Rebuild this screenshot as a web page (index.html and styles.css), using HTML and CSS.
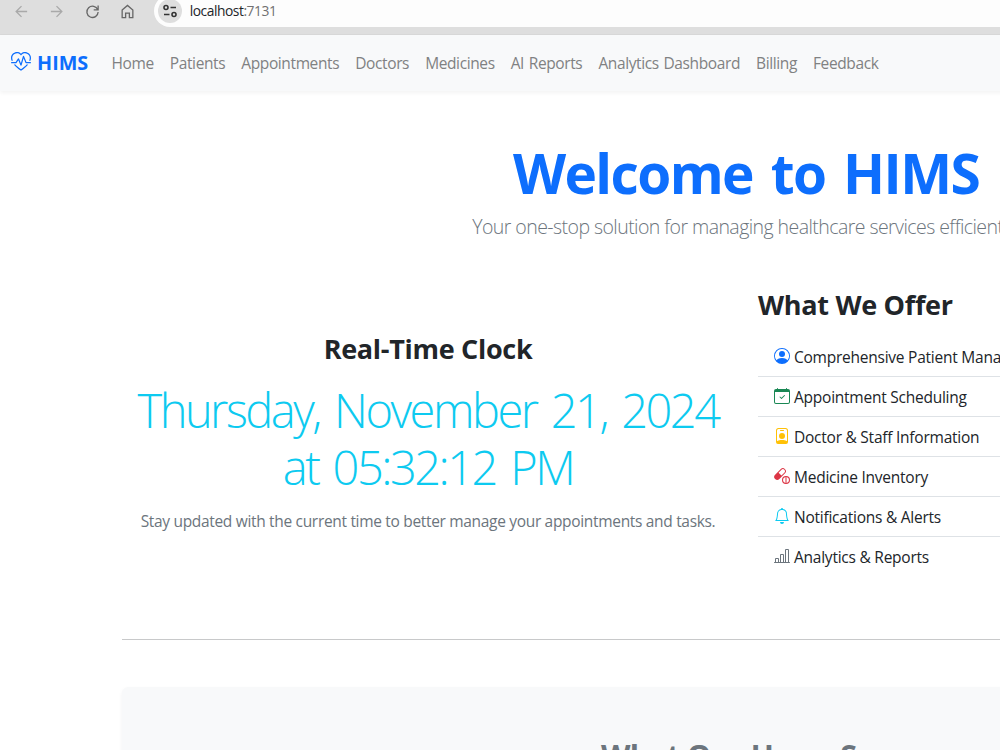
FILE: index.html
```html
<!DOCTYPE html>
<html lang="en">
<head>
    <meta charset="utf-8">
    <title>HIMS</title>
    <link rel="stylesheet" href="styles.css">
</head>
<body>
    <!-- Browser toolbar -->
    <div class="toolbar">
        <svg class="tool" viewBox="0 0 16 16"><path d="M14 8H2.5M8 2.3 2.3 8 8 13.7"/></svg>
        <svg class="tool" viewBox="0 0 16 16"><path d="M2 8h11.500M8 2.300 13.700 8 8 13.700"/></svg>
        <svg class="tool dark" viewBox="0 0 16 16"><path d="M13.600 6.200A6 6 0 1 0 14 8.500M14 1.500v4.800H9.300"/></svg>
        <svg class="tool dark" viewBox="0 0 16 16"><path d="M2.300 6.400 8 1.500l5.700 4.900v8.100H10V9.800H6v4.700H2.300z"/></svg>
        <div class="address">
            <span class="site-info">
                <svg viewBox="0 0 16 16"><circle cx="4" cy="4.500" r="2"/><path d="M8.500 4.500H14M2 11.500h5.500"/><circle cx="12" cy="11.500" r="2"/></svg>
            </span>
            <span class="url">localhost<span class="port">:7131</span></span>
        </div>
    </div>

    <div class="page">
        <nav class="navbar">
            <a class="brand">
                <svg class="brand-icon" viewBox="0 0 16 16"><path d="m8 2.748-.717-.737C5.600.281 2.514.878 1.400 3.053.918 3.995.780 5.323 1.508 7H.430c-2.128-5.697 4.165-8.830 7.394-5.857q.090.083.176.171a3 3 0 0 1 .176-.170c3.230-2.974 9.522.159 7.394 5.856h-1.078c.728-1.677.590-3.005.108-3.947C13.486.878 10.400.280 8.717 2.010zM2.212 10h1.315C4.593 11.183 6.050 12.458 8 13.795c1.949-1.337 3.407-2.612 4.473-3.795h1.315c-1.265 1.566-3.140 3.250-5.788 5-2.648-1.750-4.523-3.434-5.788-5"/><path d="M10.464 3.314a.5.5 0 0 0-.945.049L7.921 8.956 6.464 5.314a.5.5 0 0 0-.880-.091L3.732 8H.5a.5.5 0 0 0 0 1H4a.5.5 0 0 0 .416-.223l1.473-2.209 1.647 4.118a.5.5 0 0 0 .945-.049l1.598-5.593 1.457 3.642A.5.5 0 0 0 12 9h3.500a.5.5 0 0 0 0-1h-3.162z"/></svg>
                HIMS
            </a>
            <div class="nav-links">
                <a>Home</a>
                <a>Patients</a>
                <a>Appointments</a>
                <a>Doctors</a>
                <a>Medicines</a>
                <a>AI Reports</a>
                <a>Analytics Dashboard</a>
                <a>Billing</a>
                <a>Feedback</a>
            </div>
        </nav>

        <main class="container">
            <header class="hero">
                <h1>Welcome to HIMS</h1>
                <p class="lead">Your one-stop solution for managing healthcare services efficiently.</p>
            </header>

            <div class="row">
                <section class="clock">
                    <h2>Real-Time Clock</h2>
                    <div class="time">Thursday, November 21, 2024<br>at 05:32:12 PM</div>
                    <p class="note">Stay updated with the current time to better manage your appointments and tasks.</p>
                </section>
                <section class="offer">
                    <h2>What We Offer</h2>
                    <ul>
                        <li>
                            <svg class="blue" viewBox="0 0 16 16"><path d="M11 6a3 3 0 1 1-6 0 3 3 0 0 1 6 0"/><path fill-rule="evenodd" d="M0 8a8 8 0 1 1 16 0A8 8 0 0 1 0 8m8-7a7 7 0 0 0-5.468 11.370C3.242 11.226 4.805 10 8 10s4.757 1.225 5.468 2.370A7 7 0 0 0 8 1"/></svg>
                            <span>Comprehensive Patient Management</span>
                        </li>
                        <li>
                            <svg class="green" viewBox="0 0 16 16"><path d="M10.854 7.146a.5.5 0 0 1 0 .708l-3 3a.5.5 0 0 1-.708 0l-1.500-1.500a.5.5 0 1 1 .708-.708L7.500 9.793l2.646-2.647a.5.5 0 0 1 .708 0"/><path d="M3.500 0a.5.5 0 0 1 .5.5V1h8V.5a.5.5 0 0 1 1 0V1h1a2 2 0 0 1 2 2v11a2 2 0 0 1-2 2H2a2 2 0 0 1-2-2V3a2 2 0 0 1 2-2h1V.5a.5.5 0 0 1 .5-.5M1 4v10a1 1 0 0 0 1 1h12a1 1 0 0 0 1-1V4z"/></svg>
                            <span>Appointment Scheduling</span>
                        </li>
                        <li>
                            <svg class="yellow" viewBox="0 0 16 16"><path d="M6.500 2a.5.5 0 0 0 0 1h3a.5.5 0 0 0 0-1zM11 8a3 3 0 1 1-6 0 3 3 0 0 1 6 0"/><path d="M4.500 0A2.500 2.500 0 0 0 2 2.500V14a2 2 0 0 0 2 2h8a2 2 0 0 0 2-2V2.500A2.500 2.500 0 0 0 11.500 0zM3 2.500A1.500 1.500 0 0 1 4.500 1h7A1.500 1.500 0 0 1 13 2.500v10.795a4.200 4.200 0 0 0-.776-.492C11.392 12.387 10.063 12 8 12s-3.392.387-4.224.803a4.200 4.200 0 0 0-.776.492z"/></svg>
                            <span>Doctor &amp; Staff Information</span>
                        </li>
                        <li>
                            <svg class="red" viewBox="0 0 16 16"><path d="M11.020 5.364a3 3 0 0 0-4.242-4.243L1.121 6.778a3 3 0 1 0 4.243 4.243l5.657-5.657Zm-6.413-.657 2.878-2.879a2 2 0 1 1 2.829 2.829L7.435 7.536zM12 8a4 4 0 1 1 0 8 4 4 0 0 1 0-8m-.5 1.042a3 3 0 0 0 0 5.917zm1 5.917a3 3 0 0 0 0-5.917z"/></svg>
                            <span>Medicine Inventory</span>
                        </li>
                        <li>
                            <svg class="cyan" viewBox="0 0 16 16"><path d="M8 16a2 2 0 0 0 2-2H6a2 2 0 0 0 2 2M8 1.918l-.797.161A4 4 0 0 0 4 6c0 .628-.134 2.197-.459 3.742-.160.767-.376 1.566-.663 2.258h10.244c-.287-.692-.502-1.490-.663-2.258C12.134 8.197 12 6.628 12 6a4 4 0 0 0-3.203-3.920zM14.220 12c.223.447.481.801.780 1H1c.299-.199.557-.553.780-1C2.680 10.200 3 6.880 3 6c0-2.420 1.720-4.440 4.005-4.901a1 1 0 1 1 1.990 0A5 5 0 0 1 13 6c0 .880.320 4.200 1.220 6"/></svg>
                            <span>Notifications &amp; Alerts</span>
                        </li>
                        <li>
                            <svg class="gray" viewBox="0 0 16 16"><path d="M11 2a1 1 0 0 1 1-1h2a1 1 0 0 1 1 1v12h.5a.5.5 0 0 1 0 1H.5a.5.5 0 0 1 0-1H1v-3a1 1 0 0 1 1-1h2a1 1 0 0 1 1 1v3h1V7a1 1 0 0 1 1-1h2a1 1 0 0 1 1 1v7h1zm1 12h2V2h-2zm-3 0V7H7v7zm-5 0v-3H2v3z"/></svg>
                            <span>Analytics &amp; Reports</span>
                        </li>
                    </ul>
                </section>
            </div>

            <hr>

            <section class="reviews">
                <h2>What Our Users Say</h2>
            </section>
        </main>
    </div>
</body>
</html>
```
FILE: styles.css
```css
* {
    box-sizing: border-box;
}
body {
    margin: 0;
    height: 750px;
    overflow: hidden;
    font-family: "Segoe UI", "Open Sans", "Noto Sans", sans-serif;
    font-size: 15.5px;
    color: #212529;
    background-color: #fff;
}
h1, h2, p, ul {
    margin: 0;
    padding: 0;
}
svg {
    flex: none;
    fill: currentColor;
}

/* browser toolbar */
.toolbar {
    display: flex;
    width: 1492px;
    height: 35px;
    padding-left: 14px;
    background-color: #dedede;
    border-bottom: 1px solid #d8d8d8;
}
.tool {
    width: 15px;
    height: 15px;
    margin: 4px 20.3px 0 0;
    fill: none;
    stroke: #a9a9a9;
    stroke-width: 1.4;
}
.dark {
    stroke: #666;
}
.address {
    display: flex;
    flex: 1;
    height: 32px;
    margin-top: -5px;
    margin-left: -1px;
    padding: 4px;
    border-radius: 16px;
    background-color: #fdfdfd;
}
.site-info {
    width: 24px;
    height: 24px;
    padding: 4px;
    border-radius: 50%;
    background-color: #dedede;
}
.site-info svg {
    display: block;
    width: 16px;
    height: 16px;
    fill: none;
    stroke: #333;
    stroke-width: 1.6;
}
.url {
    margin-left: 7.5px;
    font-size: 13.8px;
    line-height: 24px;
    letter-spacing: -0.45px;
}
.port {
    color: #707070;
}

.page {
    width: 1492px;
}
.navbar {
    display: flex;
    align-items: center;
    height: 56px;
    padding: 0 12px 0 11px;
    background-color: #f8f9fa;
    box-shadow: 0 2px 4px rgba(0, 0, 0, 0.05);
}
.brand {
    display: flex;
    align-items: center;
    width: 92.5px;
    gap: 6px;
    padding-bottom: 2px;
    font-size: 19.8px;
    font-weight: 700;
    color: #0d6efd;
}
.brand-icon {
    width: 20px;
    height: 20px;
}
.nav-links {
    display: flex;
    color: #808182;
}
.nav-links a {
    padding: 0 8px;
    letter-spacing: -0.38px;
    word-spacing: 1px;
}

.container {
    width: 1248px;
    margin-left: 122px;
}
.hero {
    padding-top: 48px;
    text-align: center;
}
h1 {
    font-size: 55px;
    line-height: 67px;
    font-weight: 700;
    letter-spacing: -1.6px;
    word-spacing: 5px;
    color: #0d6efd;
}
.lead {
    margin-top: 6px;
    font-size: 19.5px;
    line-height: 30px;
    font-weight: 300;
    letter-spacing: -0.56px;
    color: #6c757d;
}
.row {
    display: grid;
    grid-template-columns: minmax(0, 1fr) minmax(0, 1fr);
    gap: 24px;
    align-items: center;
    margin-top: 46px;
}
h2 {
    font-size: 27px;
    line-height: 34px;
    font-weight: 700;
    letter-spacing: -0.3px;
}
.clock {
    text-align: center;
}
.time {
    margin-top: 16px;
    font-size: 47px;
    line-height: 57px;
    font-weight: 300;
    letter-spacing: -2.5px;
    word-spacing: 4.5px;
    white-space: nowrap;
    color: #0dcaf0;
}
.note {
    margin-top: 13px;
    line-height: 24px;
    letter-spacing: -0.32px;
    white-space: nowrap;
    color: #6c757d;
}
.offer ul {
    margin-top: 15px;
    list-style: none;
}
.offer li {
    display: flex;
    align-items: center;
    height: 40px;
    padding-left: 16px;
    gap: 4px;
    letter-spacing: -0.24px;
    white-space: nowrap;
    border-bottom: 1px solid #dee2e6;
}
.offer li:last-child {
    border-bottom: 0;
}
.offer svg {
    width: 16px;
    height: 16px;
    margin-bottom: 2px;
}
.blue {
    color: #0d6efd;
}
.green {
    color: #198754;
}
.yellow {
    color: #ffc107;
}
.red {
    color: #dc3545;
}
.cyan {
    color: #0dcaf0;
}
.gray {
    color: #6c757d;
}
hr {
    height: 1px;
    margin: 62px 0 47px;
    border: 0;
    background-color: #c8c9ca;
}
.reviews {
    height: 300px;
    padding-top: 49px;
    border-radius: 6px;
    text-align: center;
    background-color: #f8f9fa;
    box-shadow: 0 2px 4px rgba(0, 0, 0, 0.05);
}
.reviews h2 {
    font-size: 30.5px;
    line-height: 38px;
    letter-spacing: -0.6px;
    color: #6c757d;
}
```
